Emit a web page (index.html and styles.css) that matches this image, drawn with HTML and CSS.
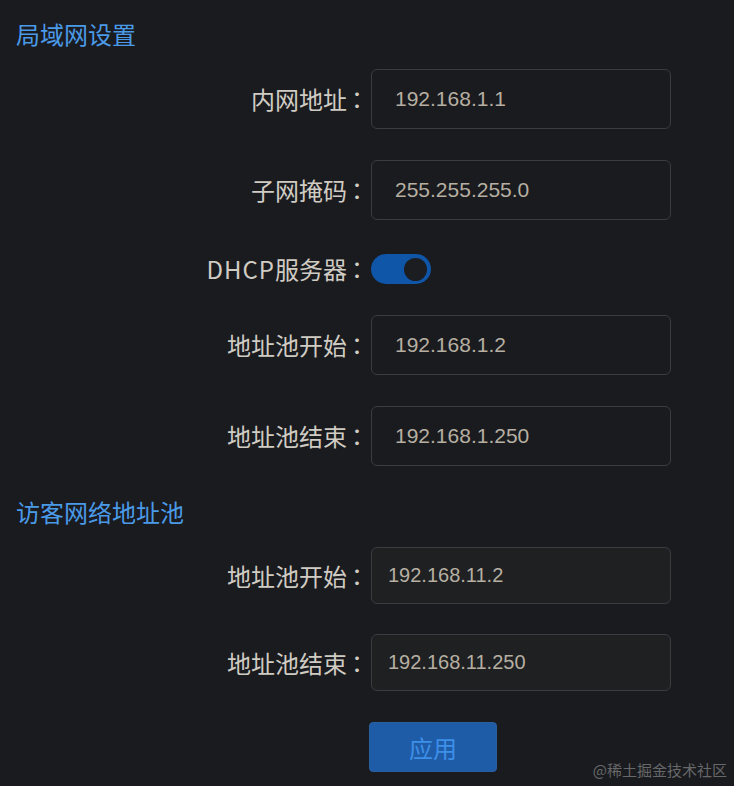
FILE: index.html
```html
<!DOCTYPE html>
<html lang="zh-CN">
<head>
<meta charset="utf-8">
<title>局域网设置</title>
<link rel="stylesheet" href="styles.css">
</head>
<body>
<div class="page">
  <h2 class="section section-lan">局域网设置</h2>
  <div class="form lan">
    <div class="row">
      <label class="label">内网地址<span class="colon">：</span></label>
      <div class="input">192.168.1.1</div>
    </div>
    <div class="row">
      <label class="label">子网掩码<span class="colon">：</span></label>
      <div class="input">255.255.255.0</div>
    </div>
    <div class="row row-switch">
      <label class="label"><span class="latin">DHCP</span>服务器<span class="colon">：</span></label>
      <div class="switch"><span class="knob"></span></div>
    </div>
    <div class="row">
      <label class="label">地址池开始<span class="colon">：</span></label>
      <div class="input">192.168.1.2</div>
    </div>
    <div class="row">
      <label class="label">地址池结束<span class="colon">：</span></label>
      <div class="input">192.168.1.250</div>
    </div>
  </div>

  <h2 class="section section-guest">访客网络地址池</h2>
  <div class="form guest">
    <div class="row">
      <label class="label">地址池开始<span class="colon">：</span></label>
      <div class="input input-guest">192.168.11.2</div>
    </div>
    <div class="row">
      <label class="label">地址池结束<span class="colon">：</span></label>
      <div class="input input-guest">192.168.11.250</div>
    </div>
    <div class="row row-btn">
      <span></span>
      <button class="btn">应用</button>
    </div>
  </div>
  <div class="watermark">@稀土掘金技术社区</div>
</div>
</body>
</html>
```

FILE: styles.css
```css
html, body {
  margin: 0;
  padding: 0;
  background: #1a1b1e;
}
body {
  font-family: "Noto Sans CJK SC", "Noto Sans", sans-serif;
  color: #d0ccc4;
  width: 734px;
  height: 786px;
  overflow: hidden;
}
.page {
  position: relative;
  height: 786px;
}
.section {
  margin: 0;
  padding-left: 16px;
  font-size: 24px;
  font-weight: 400;
  line-height: 36px;
  color: #4a9ae8;
}
.section-lan {
  padding-top: 16px;
  margin-bottom: 17px;
}
.section-guest {
  margin-top: 28px;
  margin-bottom: 17px;
}
.form {
  display: flex;
  flex-direction: column;
  gap: 31px;
}
.form.guest {
  gap: 30px;
}
.row {
  display: grid;
  grid-template-columns: 371px 300px;
  align-items: center;
}
.label {
  text-align: right;
  font-size: 24px;
  line-height: 30px;
  color: #d0ccc4;
  white-space: nowrap;
}
.latin {
  letter-spacing: 1px;
}
.colon {
  font-family: "Noto Sans CJK TC", "Noto Sans CJK SC", sans-serif;
  display: inline-block;
  width: 24px;
  text-align: center;
  position: relative;
  left: -2px;
}
.input {
  box-sizing: border-box;
  height: 60px;
  border: 1px solid #3a3c40;
  border-radius: 6px;
  padding-left: 23px;
  display: flex;
  align-items: center;
  font-family: "Liberation Sans", Arial, sans-serif;
  font-size: 21px;
  color: #b6afa2;
}
.input-guest {
  height: 57px;
  background: #1e2022;
  padding-left: 16px;
  font-size: 20px;
}
.row-switch {
  margin-top: 3px;
}
.switch {
  box-sizing: border-box;
  width: 60px;
  height: 30px;
  border-radius: 15px;
  background: #0f55a8;
  display: flex;
  align-items: center;
  justify-content: flex-end;
  padding-right: 4px;
}
.knob {
  width: 23px;
  height: 23px;
  border-radius: 50%;
  background: #1b1d21;
}
.row-btn {
  margin-top: 1px;
}
.btn {
  justify-self: start;
  margin-left: -2px;
  width: 128px;
  height: 50px;
  border: 1px solid #2a5f9f;
  border-radius: 4px;
  background: #1f5ca8;
  color: #3d8fe8;
  font-family: "Noto Sans CJK SC", sans-serif;
  font-size: 24px;
  padding: 0;
}
.watermark {
  position: absolute;
  right: 7px;
  bottom: 6px;
  font-size: 15px;
  line-height: 20px;
  color: #67686a;
}
```
